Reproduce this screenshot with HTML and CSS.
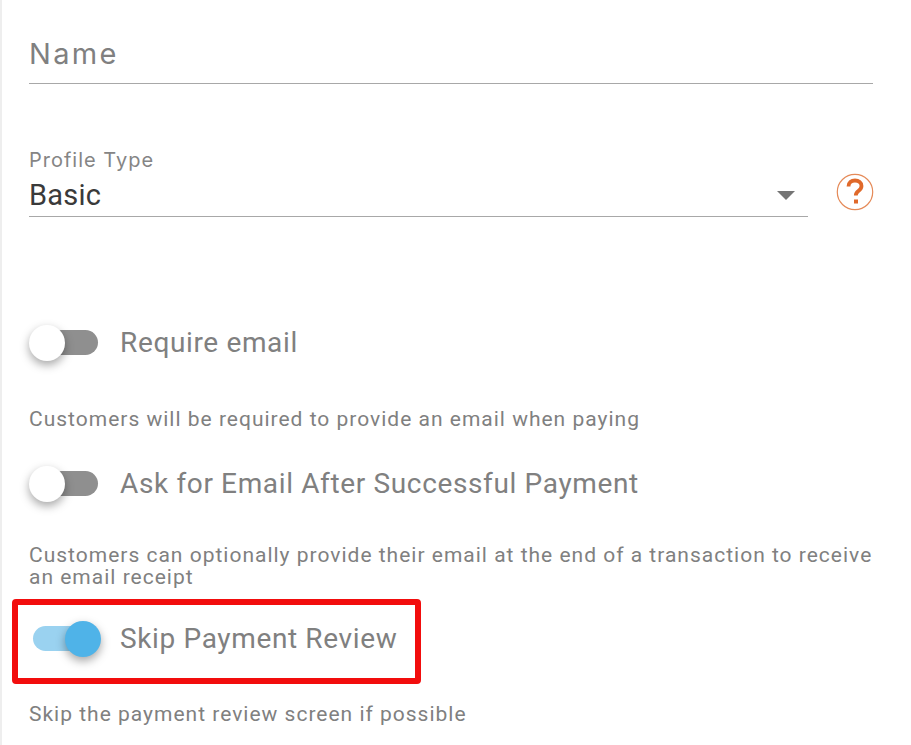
FILE: index.html
```html
<!DOCTYPE html>
<html lang="en">
<head>
    <meta charset="UTF-8">
    <title>Profile settings</title>
    <link rel="stylesheet" href="styles.css">
</head>
<body>
    <div class="form">
        <div class="name-field">
            <span class="name-placeholder">Name</span>
        </div>

        <div class="type-row">
            <div class="type-field">
                <label class="type-label">Profile Type</label>
                <div class="type-select">
                    <span class="type-value">Basic</span>
                    <span class="arrow"></span>
                </div>
            </div>
            <svg class="help" width="38" height="38" viewBox="0 0 38 38">
                <circle cx="19" cy="19" r="17.700" fill="none" stroke="#e58a58" stroke-width="1.200"/>
                <path d="M12.500 13.500c0-3.900 2.800-6 6.500-6 3.800 0 6.500 2.200 6.500 5.400 0 2.500-1.400 3.700-3.100 5-1.900 1.400-2.600 2.400-2.600 4.600" fill="none" stroke="#e0692a" stroke-width="3.800"/>
                <rect x="18" y="26.500" width="4" height="4" fill="#e0692a"/>
            </svg>
        </div>

        <div class="toggle-row first">
            <span class="switch"><span class="thumb"></span></span>
            <span class="toggle-label">Require email</span>
        </div>
        <p class="hint one">Customers will be required to provide an email when paying</p>

        <div class="toggle-row second">
            <span class="switch"><span class="thumb"></span></span>
            <span class="toggle-label">Ask for Email After Successful Payment</span>
        </div>
        <p class="hint two">Customers can optionally provide their email at the end of a transaction to receive an email receipt</p>

        <div class="toggle-row third">
            <div class="highlight"></div>
            <span class="switch on"><span class="thumb"></span></span>
            <span class="toggle-label">Skip Payment Review</span>
        </div>
        <p class="hint three">Skip the payment review screen if possible</p>
    </div>
</body>
</html>
```

FILE: styles.css
```css
html, body {
    margin: 0;
    padding: 0;
    height: 745px;
    overflow: hidden;
    background-color: #fff;
}

body {
    font-family: Roboto, sans-serif;
    border-left: 2px solid #eeeeee;
}

.form {
    padding: 0 38px 0 27px;
}

.name-field {
    height: 84px;
    box-sizing: border-box;
    padding-top: 35px;
    border-bottom: 1px solid #a8a8a8;
}

.name-placeholder {
    display: block;
    font-family: Inter, sans-serif;
    font-size: 29px;
    line-height: 38px;
    letter-spacing: 2.3px;
    color: #808080;
}

.type-row {
    display: flex;
    align-items: flex-start;
    margin-top: 62px;
}

.type-field {
    flex: 1;
    height: 71px;
    box-sizing: border-box;
    border-bottom: 1px solid #a8a8a8;
}

.type-label {
    display: block;
    font-family: Inter, sans-serif;
    font-size: 20px;
    line-height: 28px;
    letter-spacing: 1px;
    color: #858585;
}

.type-select {
    display: flex;
    align-items: center;
    justify-content: space-between;
    height: 42px;
}

.type-value {
    font-size: 29px;
    letter-spacing: 0.2px;
    color: #3a3a3a;
}

.arrow {
    width: 0;
    height: 0;
    margin-right: 13px;
    border-left: 9px solid transparent;
    border-right: 9px solid transparent;
    border-top: 9px solid #757575;
}

.help {
    margin: 27px -1px 0 28px;
}

.toggle-row {
    position: relative;
    display: flex;
    align-items: center;
    height: 36px;
}

.toggle-row.first {
    margin-top: 107px;
}

.toggle-row.second {
    margin-top: 35px;
}

.toggle-row.third {
    margin-top: 32px;
}

.switch {
    position: relative;
    display: block;
    width: 65px;
    height: 25px;
    margin-left: 4px;
    margin-right: 22px;
    border-radius: 13px;
    background-color: #8f8f8f;
}

.thumb {
    position: absolute;
    top: -5px;
    left: -4px;
    width: 36px;
    height: 36px;
    border-radius: 50%;
    background-color: #fff;
    box-shadow: 0 4px 10px rgba(0, 0, 0, 0.35);
}

.switch.on {
    background-color: #9ad2f0;
}

.switch.on .thumb {
    left: 32px;
    background-color: #4fb3e8;
}

.toggle-label {
    font-size: 28px;
    letter-spacing: 0.64px;
    color: #808080;
}

.hint {
    margin: 0;
    font-size: 21px;
    line-height: 22px;
    letter-spacing: 1px;
    color: #808080;
}

.hint.one {
    margin-top: 48px;
}

.hint.two {
    margin-top: 43px;
}

.hint.three {
    margin-top: 47px;
}

.highlight {
    position: absolute;
    top: -21px;
    left: -17px;
    width: 409px;
    height: 85px;
    box-sizing: border-box;
    border: 6px solid #f20d0d;
    border-radius: 4px;
}
```
